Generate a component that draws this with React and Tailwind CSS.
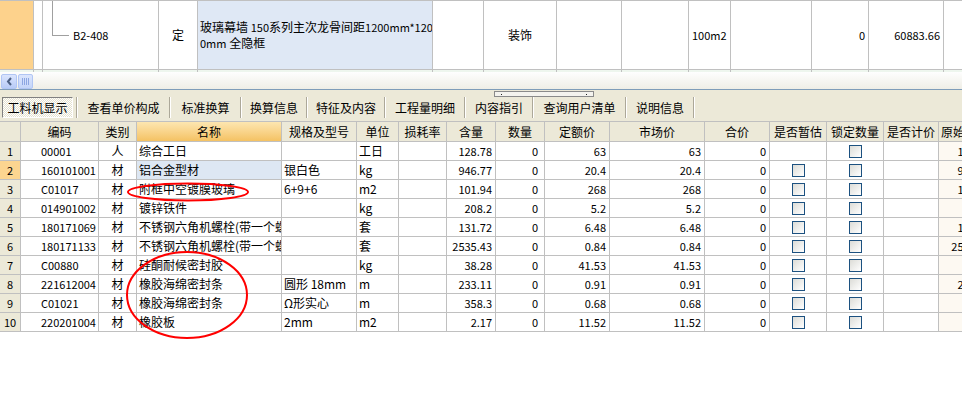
const FONT = "font-['SimSun','Noto_Sans_CJK_SC',sans-serif]";

const topCols = [
  { w: 34, cls: "bg-[#fdd28c]" },
  { w: 9 },
  { w: 116, tree: "B2-408" },
  { w: 39, text: "定", align: "center" },
  { w: 235, cls: "bg-[#dfe8f5]", desc: true },
  { w: 51 },
  { w: 73, text: "装饰", align: "center" },
  { w: 65 },
  { w: 67 },
  { w: 42, text: "100m2", align: "left", num: true },
  { w: 81 },
  { w: 57, text: "0", align: "right", num: true },
  { w: 75, text: "60883.66", align: "right", num: true },
  { w: 40 },
];

const tabs = [
  { label: "查看单价构成", w: 93 },
  { label: "标准换算", w: 71 },
  { label: "换算信息", w: 66 },
  { label: "特征及内容", w: 78 },
  { label: "工程量明细", w: 80 },
  { label: "内容指引", w: 68 },
  { label: "查询用户清单", w: 93 },
  { label: "说明信息", w: 68 },
];

const cols = [
  { key: "no", label: "", w: 21, align: "center", num: true },
  { key: "code", label: "编码", w: 78, align: "left", pad: "pl-[20px]", num: true },
  { key: "type", label: "类别", w: 38, align: "center" },
  { key: "name", label: "名称", w: 145, align: "left", pad: "pl-[2px]" },
  { key: "spec", label: "规格及型号", w: 75, align: "left", pad: "pl-[2px]" },
  { key: "unit", label: "单位", w: 42, align: "left", pad: "pl-[2px]" },
  { key: "loss", label: "损耗率", w: 48, align: "right" },
  { key: "qty", label: "含量", w: 49, align: "right", pad: "pr-[3px]", num: true },
  { key: "num", label: "数量", w: 49, align: "right", pad: "pr-[6px]", num: true },
  { key: "quota", label: "定额价", w: 65, align: "right", pad: "pr-[3px]", num: true },
  { key: "market", label: "市场价", w: 95, align: "right", pad: "pr-[3px]", num: true },
  { key: "total", label: "合价", w: 65, align: "right", pad: "pr-[3px]", num: true },
  { key: "est", label: "是否暂估", w: 57, align: "center" },
  { key: "lock", label: "锁定数量", w: 57, align: "center" },
  { key: "calc", label: "是否计价", w: 55, align: "center" },
  { key: "orig", label: "原始含量", w: 56, align: "right", pad: "pr-[3px]", num: true },
];

const rows = [
  ["1", "00001", "人", "综合工日", "", "工日", "128.78", "63", false],
  ["2", "160101001", "材", "铝合金型材", "银白色", "kg", "946.77", "20.4", true],
  ["3", "C01017", "材", "附框中空镀膜玻璃", "6+9+6", "m2", "101.94", "268", true],
  ["4", "014901002", "材", "镀锌铁件", "", "kg", "208.2", "5.2", true],
  ["5", "180171069", "材", "不锈钢六角机螺栓(带一个螺母)", "", "套", "131.72", "6.48", true],
  ["6", "180171133", "材", "不锈钢六角机螺栓(带一个螺母)", "", "套", "2535.43", "0.84", true],
  ["7", "C00880", "材", "硅酮耐候密封胶", "", "kg", "38.28", "41.53", true],
  ["8", "221612004", "材", "橡胶海绵密封条", "圆形 18mm", "m", "233.11", "0.91", true],
  ["9", "C01021", "材", "橡胶海绵密封条", "Ω形实心", "m", "358.3", "0.68", true],
  ["10", "220201004", "材", "橡胶板", "2mm", "m2", "2.17", "11.52", true],
];

const alignCls = { left: "justify-start", center: "justify-center", right: "justify-end" };

function Checkbox() {
  return <span className="block h-[13px] w-[13px] border border-[#1c5180] bg-gradient-to-br from-[#dcdcd7] to-white" />;
}

function TopRow() {
  return (
    <div>
      <div className="flex h-[70px] border-y border-[#c0c0c0]">
        {topCols.map((c, i) => (
          <div
            key={i}
            style={{ width: c.w }}
            className={`flex shrink-0 border-r border-[#c0c0c0] ${c.cls || ""} ${alignCls[c.align] || ""} ${c.desc || c.tree ? "" : "items-center px-[3px]"} ${c.num ? "text-[11px]" : ""}`}
          >
            {c.tree ? (
              <div className="flex w-full">
                <div className="ml-[9px] h-[35px] w-[17px] shrink-0 border-b border-l border-[#a0a0a0]" />
                <span className="ml-[4px] self-start pt-[26px] text-[11px] leading-[16px]">{c.tree}</span>
              </div>
            ) : c.desc ? (
              <div className="flex flex-col justify-center pl-[2px] leading-[16px] whitespace-nowrap overflow-hidden">
                <span>
                  玻璃幕墙 <span className="text-[11px]">150</span>系列主次龙骨间距<span className="text-[11px]">1200mm*120</span>
                </span>
                <span>
                  <span className="text-[11px]">0mm</span> 全隐框
                </span>
              </div>
            ) : (
              c.text
            )}
          </div>
        ))}
      </div>
      <div className="flex h-[2px] bg-[#eef6ee]">
        {topCols.map((c, i) => (
          <div key={i} style={{ width: c.w }} className="shrink-0 border-r border-[#c0c0c0]" />
        ))}
      </div>
    </div>
  );
}

function ScrollBar() {
  return (
    <div className="flex h-[17px] items-start gap-[1px] bg-gradient-to-b from-[#fefefe] to-[#efeee6] pl-[1px] pt-[2px]">
      <div className="flex h-[15px] w-[16px] items-center justify-center rounded-[2px] border border-[#b1c6f4] bg-gradient-to-b from-[#dbe5fd] to-[#b8cbf7]">
        <svg width="7" height="9" viewBox="0 0 7 9">
          <path d="M5 1 L2 4.5 L5 8" stroke="#4d6185" strokeWidth="2" fill="none" />
        </svg>
      </div>
      <div className="flex h-[15px] w-[15px] items-center justify-center gap-[1px] rounded-[2px] border border-[#b1c6f4] bg-gradient-to-b from-[#dbe5fd] to-[#c4d5f9]">
        {[0, 1, 2, 3].map((i) => (
          <span key={i} className="h-[7px] w-[1px] bg-[#8ca6e2]" />
        ))}
      </div>
    </div>
  );
}

function TabBar() {
  return (
    <div className="h-[32px] border-t border-[#7f9db9] bg-[#ece9d8]">
      <div className="h-[7px] pl-[494px] pt-[1px]">
        <div className="flex h-[6px] w-[100px] items-center justify-between border border-[#8a8a8a] bg-[#f4f3ee] px-[6px]">
          <span className="h-[1px] w-[1px] bg-[#222]" />
          <span className="h-[1px] w-[1px] bg-[#222]" />
        </div>
      </div>
      <div className="flex h-[21px] pl-[2px]">
        <div className="flex w-[71px] items-center justify-center border border-b-white border-l-[#808080] border-r-white border-t-[#808080] bg-[repeating-conic-gradient(#ffffff_0_25%,#e4e1cf_0_50%)] bg-[length:2px_2px]">
          工料机显示
        </div>
        <div className="w-[3px]" />
        <div className="h-full w-[2px] border-l border-r border-l-[#aca899] border-r-white" />
        {tabs.map((t) => (
          <div key={t.label} className="flex">
            <div style={{ width: t.w - 2 }} className="flex items-center justify-center">
              {t.label}
            </div>
            <div className="h-full w-[2px] border-l border-r border-l-[#aca899] border-r-white" />
          </div>
        ))}
      </div>
    </div>
  );
}

function Grid() {
  return (
    <div className="w-max">
      <div className="flex h-[21px] border-y border-[#c0c0c0] bg-[#ece9d8]">
        {cols.map((c) => (
          <div
            key={c.key}
            style={{ width: c.w }}
            className={`flex shrink-0 items-center border-r border-[#c0c0c0] whitespace-nowrap overflow-hidden ${
              c.key === "name" ? "bg-gradient-to-b from-[#fde6b0] to-[#f4c262]" : ""
            } ${c.key === "orig" ? "justify-start pl-[2px]" : "justify-center"}`}
          >
            {c.label}
          </div>
        ))}
      </div>
      {rows.map((r, ri) => {
        const [no, code, type, name, spec, unit, qty, price, hasEst] = r;
        const vals = {
          no,
          code,
          type,
          name,
          spec,
          unit,
          loss: "",
          qty,
          num: "0",
          quota: price,
          market: price,
          total: "0",
          est: hasEst ? <Checkbox /> : null,
          lock: <Checkbox />,
          calc: "",
          orig: qty,
        };
        return (
          <div key={no} className="flex h-[19px] border-b border-[#c0c0c0]">
            {cols.map((c) => {
              let bg = "";
              if (c.key === "no") bg = ri === 1 ? "bg-[#fcd590]" : "bg-[#ece9d8]";
              if (c.key === "name" && ri === 1) bg = "bg-[#dde7f3]";
              if (c.key === "orig") bg = "bg-[#fdf9f2]";
              return (
                <div
                  key={c.key}
                  style={{ width: c.w }}
                  className={`flex shrink-0 items-center whitespace-nowrap overflow-hidden border-r border-[#c0c0c0] ${alignCls[c.align]} ${c.pad || ""} ${bg} ${c.num ? "text-[11px]" : ""}`}
                >
                  {vals[c.key]}
                </div>
              );
            })}
          </div>
        );
      })}
    </div>
  );
}

export default function App() {
  return (
    <div className={`relative h-[397px] w-[962px] overflow-hidden bg-white text-[12px] leading-none text-black ${FONT}`}>
      <TopRow />
      <ScrollBar />
      <TabBar />
      <Grid />
      <svg className="pointer-events-none absolute inset-0" width="962" height="397">
        <ellipse cx="188" cy="192" rx="60" ry="8.5" fill="none" stroke="#ff0000" strokeWidth="2" />
        <ellipse cx="187" cy="295" rx="60" ry="43" fill="none" stroke="#ff0000" strokeWidth="2" />
      </svg>
    </div>
  );
}
